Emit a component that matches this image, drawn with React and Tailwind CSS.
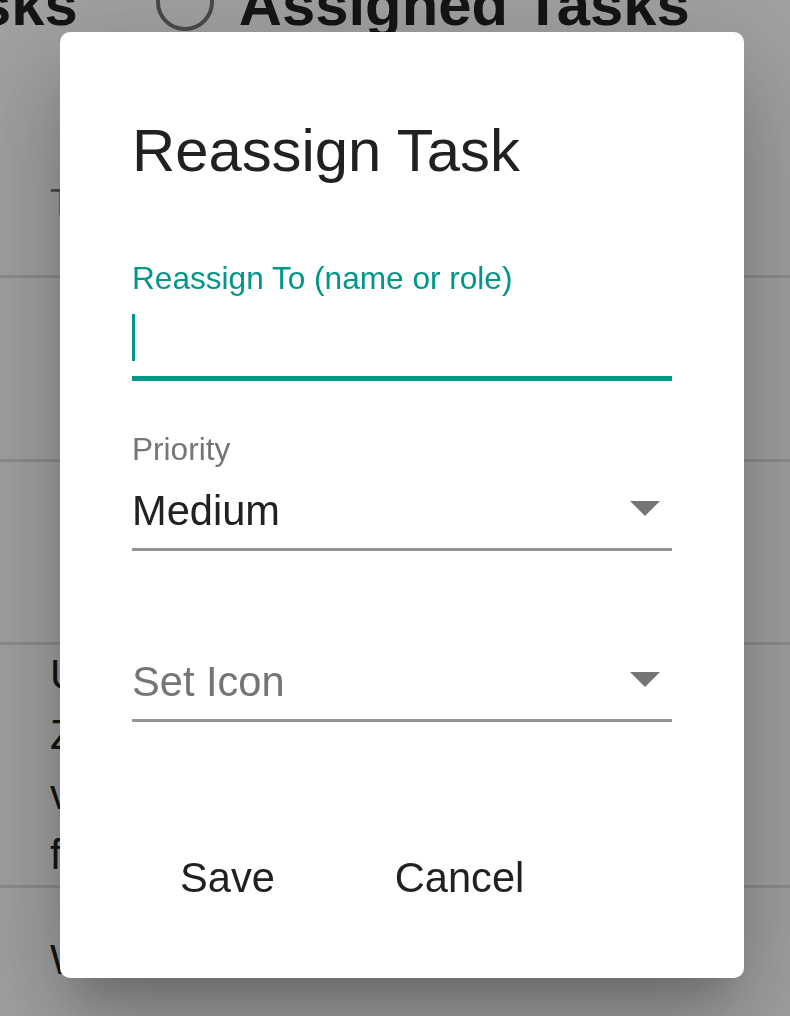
import { useState } from "react";

const font = { fontFamily: '"Liberation Sans", Arial, sans-serif' };

function DropArrow() {
  return (
    <svg width="30" height="15" viewBox="0 0 30 15" className="mt-[11px] mr-[12px] shrink-0">
      <polygon points="0,0 30,0 15,15" fill="#757575" />
    </svg>
  );
}

export default function App() {
  const [priority] = useState("Medium");

  return (
    <div style={font} className="relative min-h-[1016px] overflow-hidden bg-white">
      {/* page behind the dialog */}
      <div className="flex h-[107px] flex-col">
        <div className="-mt-[25px] -ml-[187px] flex items-center text-[59.8px] font-bold leading-[59.8px] text-[#212121]">
          <span className="whitespace-nowrap">My Tasks</span>
          <svg width="60" height="60" viewBox="0 0 60 60" className="ml-[77px] -mt-[6px] shrink-0">
            <circle cx="30" cy="30" r="27" fill="none" stroke="#757575" strokeWidth="4" />
          </svg>
          <span className="ml-[24px] whitespace-nowrap">Assigned Tasks</span>
        </div>
      </div>

      <div>
        {/* header row */}
        <div className="flex h-[171px] items-center border-b-[3px] border-[#e0e0e0] pl-[50px] pt-[24px]">
          <span className="text-[36.4px] leading-[36.4px] text-[#757575]">Task</span>
        </div>
        <div className="h-[184px] border-b-[3px] border-[#e0e0e0]" />
        <div className="h-[183px] border-b-[3px] border-[#e0e0e0]" />
        <div className="h-[243px] border-b-[3px] border-[#e0e0e0] pl-[50px]">
          <div className="text-[41.6px] leading-[60px] text-[#212121]">
            <div>Update</div>
            <div>Zoning</div>
            <div>verify</div>
            <div>files</div>
          </div>
        </div>
        <div className="pl-[50px] pt-[42px] text-[41.6px] leading-[60px] text-[#212121]">
          <div>Write</div>
        </div>
      </div>

      {/* backdrop */}
      <div className="fixed inset-0 bg-[rgba(0,0,0,0.37)]" />

      {/* dialog */}
      <div className="fixed inset-0 pl-[60px] pt-[32px]">
        <div className="w-[684px] rounded-[10px] bg-white px-[72px] pt-[89px] pb-[64px] shadow-[0_29px_39px_-18px_rgba(0,0,0,0.2),0_62px_99px_8px_rgba(0,0,0,0.14),0_23px_120px_21px_rgba(0,0,0,0.12)]">
          <h2 className="text-[59.8px] font-normal leading-[59.8px] text-[#212121]">Reassign Task</h2>

          {/* Reassign To */}
          <div className="mt-[82px]">
            <div className="text-[31.6px] leading-[31.6px] text-[#009688]">Reassign To (name or role)</div>
            <div className="mt-[20px] h-[47px] w-[3px] bg-[#009688]" />
            <div className="mt-[15px] h-[5px] bg-[#009688]" />
          </div>

          {/* Priority */}
          <div className="mt-[53px]">
            <div className="text-[31.6px] leading-[31.6px] text-[#757575]">Priority</div>
            <div className="mt-[24px] flex items-start justify-between">
              <span className="text-[41.6px] leading-[41.6px] text-[#212121]">{priority}</span>
              <DropArrow />
            </div>
            <div className="mt-[16px] h-[3px] bg-[#949494]" />
          </div>

          {/* Set Icon */}
          <div className="mt-[110px]">
            <div className="flex items-start justify-between">
              <span className="text-[41.6px] leading-[41.6px] text-[#757575]">Set Icon</span>
              <DropArrow />
            </div>
            <div className="mt-[17px] h-[3px] bg-[#949494]" />
          </div>

          {/* actions */}
          <div className="mt-[119px] flex items-center">
            <button className="ml-[27px] px-[21px] py-[15.6px] text-[41.6px] leading-[41.6px] text-[#212121]">
              Save
            </button>
            <button className="ml-[78px] px-[21px] py-[15.6px] text-[41.6px] leading-[41.6px] text-[#212121]">
              Cancel
            </button>
          </div>
        </div>
      </div>
    </div>
  );
}
